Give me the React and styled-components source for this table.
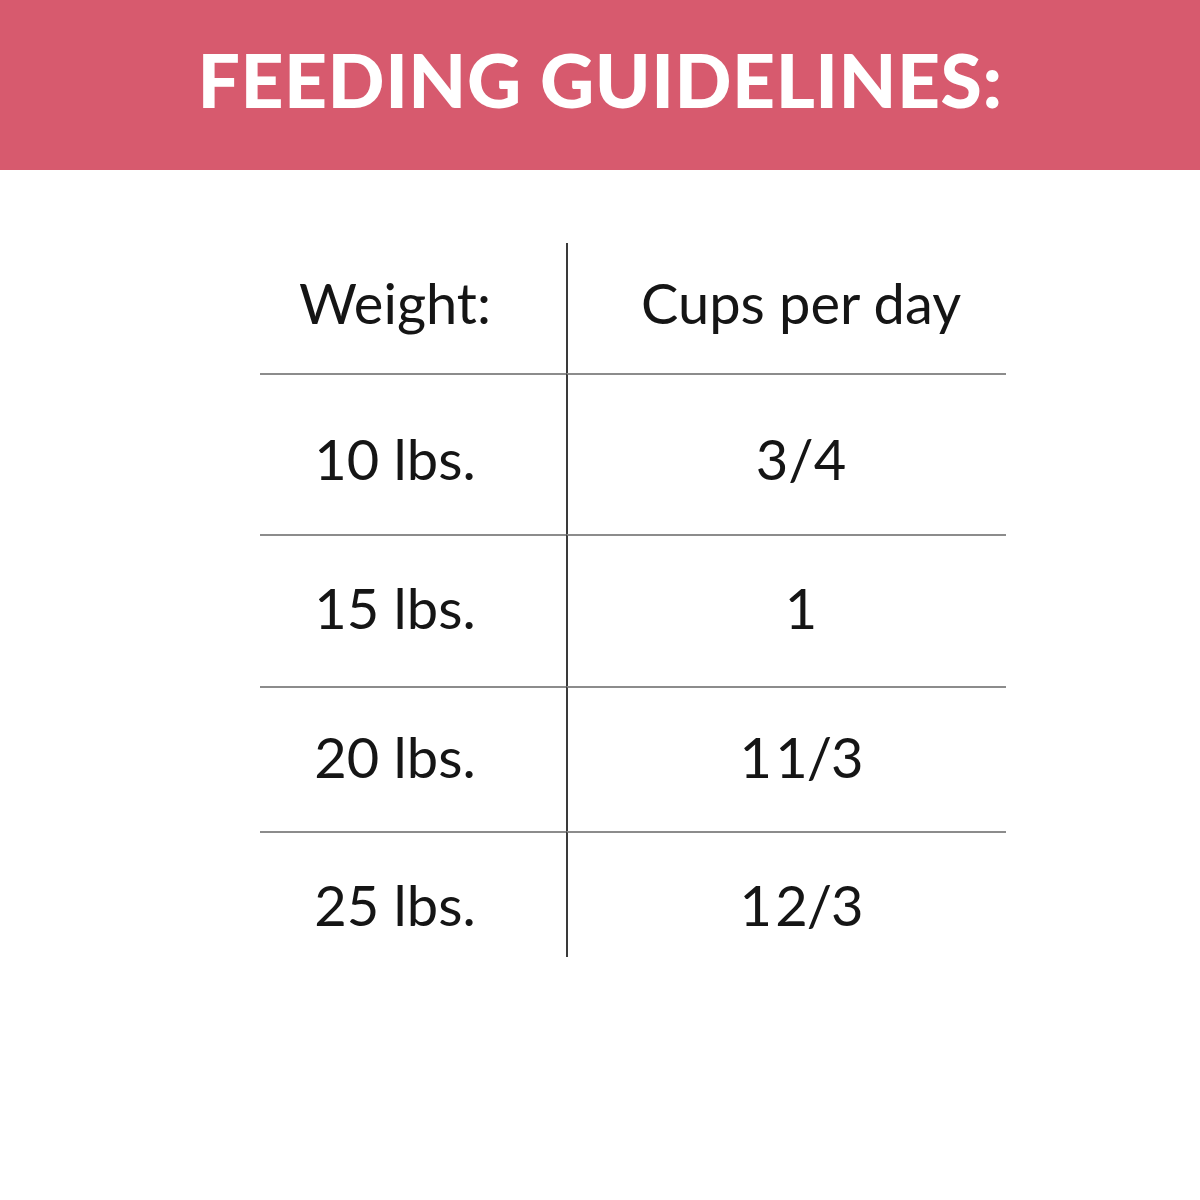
import React from "react";
import styled, { createGlobalStyle } from "styled-components";

const Global = createGlobalStyle`
  html, body { margin: 0; padding: 0; background: #ffffff; }
  body { font-family: Lato, "Open Sans", sans-serif; color: #111111; }
`;

const Page = styled.div`
  width: 1200px;
  height: 1200px;
  background: #ffffff;
`;

const Banner = styled.header`
  height: 170px;
  background: #d75a6e;
  display: flex;
  align-items: center;
  justify-content: center;
  padding-bottom: 12px;
  box-sizing: border-box;
`;

const Title = styled.h1`
  margin: 0;
  color: #ffffff;
  font-family: Lato, sans-serif;
  font-weight: 900;
  font-size: 75px;
  line-height: 1;
  letter-spacing: 0.5px;
`;

const Table = styled.div`
  margin: 73px 0 0 260px;
  width: 746px;
  display: grid;
  grid-template-columns: 306px 440px;
`;

const Cell = styled.div`
  height: ${(p) => p.$h}px;
  box-sizing: border-box;
  display: flex;
  align-items: center;
  justify-content: center;
  font-size: 56px;
  font-weight: 400;
  line-height: 1;
  color: #151515;
  border-top: ${(p) => (p.$top ? "2px solid #8c8c8c" : "none")};
  border-left: ${(p) => (p.$right ? "2px solid #3a3a3a" : "none")};
  padding-left: ${(p) => (p.$right ? 28 : 0)}px;
  padding-right: ${(p) => (p.$right ? 0 : 36)}px;
  padding-top: ${(p) => Math.max(0, p.$shift * 2)}px;
  padding-bottom: ${(p) => Math.max(0, -p.$shift * 2)}px;
`;

const Amount = styled.span`
  word-spacing: ${(p) => (p.$fraction ? "-9px" : "normal")};
  letter-spacing: ${(p) => (p.$fraction ? "-1px" : "0")};
`;

const rows = [
  { w: "Weight:", c: "Cups per day", h: 130, shift: -5 },
  { w: "10 lbs.", c: "3/4", h: 161, shift: 4 },
  { w: "15 lbs.", c: "1", h: 152, shift: -3 },
  { w: "20 lbs.", c: "1 1/3", h: 145, shift: -3, f: true },
  { w: "25 lbs.", c: "1 2/3", h: 126, shift: 10, f: true },
];

export default function App() {
  return (
    <Page>
      <Global />
      <Banner>
        <Title>FEEDING GUIDELINES:</Title>
      </Banner>
      <Table>
        {rows.map((r, i) => (
          <React.Fragment key={i}>
            <Cell $h={r.h} $shift={r.shift} $top={i > 0}>
              {r.w}
            </Cell>
            <Cell $h={r.h} $shift={r.shift} $top={i > 0} $right>
              <Amount $fraction={r.f}>{r.c}</Amount>
            </Cell>
          </React.Fragment>
        ))}
      </Table>
    </Page>
  );
}
